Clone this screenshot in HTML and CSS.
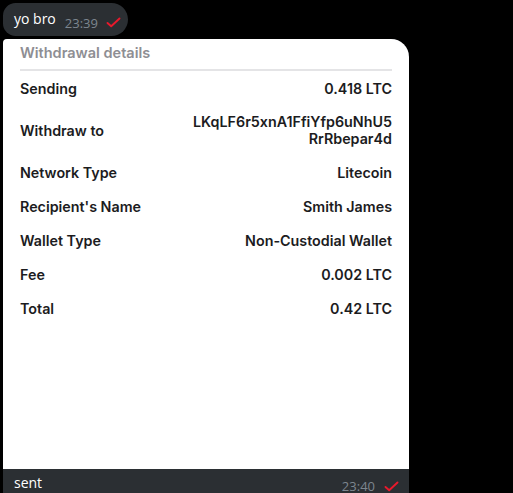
FILE: index.html
```html
<!DOCTYPE html>
<html lang="en">
<head>
  <meta charset="UTF-8" />
  <meta name="viewport" content="width=device-width, initial-scale=1.0"/>
  <title>Chat</title>
  <link rel="stylesheet" href="styles.css">
</head>
<body>
  <div class="chat">
    <!-- short text message -->
    <div class="bubble text-bubble">
      <span class="msg">yo bro</span>
      <span class="meta">23:39
        <svg class="tick" width="15" height="11" viewBox="0 0 15 11"><path d="M1.5 6 L5.2 9.3 L13.5 1.5" fill="none" stroke="#e8192c" stroke-width="1.9" stroke-linecap="round" stroke-linejoin="round"/></svg>
      </span>
    </div>

    <!-- photo message with caption -->
    <div class="bubble photo-bubble">
      <div class="receipt">
        <div class="receipt-title">Withdrawal details</div>
        <div class="row"><span class="label">Sending</span><span class="value">0.418 LTC</span></div>
        <div class="row tall"><span class="label">Withdraw to</span><span class="value">LKqLF6r5xnA1FfiYfp6uNhU5<br>RrRbepar4d</span></div>
        <div class="row"><span class="label">Network Type</span><span class="value">Litecoin</span></div>
        <div class="row"><span class="label">Recipient's Name</span><span class="value">Smith James</span></div>
        <div class="row"><span class="label">Wallet Type</span><span class="value">Non-Custodial Wallet</span></div>
        <div class="row"><span class="label">Fee</span><span class="value">0.002 LTC</span></div>
        <div class="row"><span class="label">Total</span><span class="value">0.42 LTC</span></div>
      </div>
      <div class="caption">
        <span class="msg">sent</span>
        <span class="meta">23:40
          <svg class="tick" width="15" height="11" viewBox="0 0 15 11"><path d="M1.5 6 L5.2 9.3 L13.5 1.5" fill="none" stroke="#e8192c" stroke-width="1.9" stroke-linecap="round" stroke-linejoin="round"/></svg>
        </span>
      </div>
    </div>
  </div>
</body>
</html>
```

FILE: styles.css
```css
:root {
  --bubble: #2b2f33;
  --meta: #7d868f;
  --ink: #1c1c1e;
}
body {
  margin: 0;
  background: #000;
  font-family: 'Open Sans', sans-serif;
  height: 493px;
  overflow: hidden;
}
.chat {
  padding: 3px 0 0 3px;
  display: flex;
  flex-direction: column;
  align-items: flex-start;
  gap: 3px;
}
.bubble {
  background: var(--bubble);
  color: #fff;
}
.msg {
  font-size: 14px;
}
.meta {
  font-size: 13px;
  color: var(--meta);
  display: inline-flex;
  align-items: center;
  gap: 8px;
}
/* 첫 말풍선 */
.text-bubble {
  height: 33px;
  width: 125px;
  box-sizing: border-box;
  border-radius: 13px 17px 17px 13px;
  display: flex;
  align-items: center;
  padding: 0 0 0 11px;
}
.text-bubble .msg {
  margin-top: -3px;
}
.text-bubble .meta {
  margin-left: 9px;
  margin-top: 6px;
}
/* 사진 + 캡션 */
.photo-bubble {
  width: 406px;
  border-radius: 4px 18px 0 0;
  overflow: hidden;
}
.receipt {
  background: #fff;
  height: 430px;
  padding: 3px 17px 0 17px;
  box-sizing: border-box;
  font-family: Inter, sans-serif;
  font-weight: 600;
  color: var(--ink);
}
.receipt-title {
  font-size: 14.5px;
  color: #8e8e93;
  line-height: 22px;
  padding: 0 0 5px 0;
  border-bottom: 2px solid #e4e4e6;
}
.row {
  display: flex;
  justify-content: space-between;
  align-items: center;
  font-size: 14.3px;
  height: 34px;
}
.row.tall {
  height: 50px;
}
.value {
  text-align: right;
  line-height: 17px;
}
.caption {
  height: 40px;
  display: flex;
  justify-content: space-between;
  align-items: flex-start;
  padding: 4px 10px 0 11px;
}
.caption .meta {
  margin-top: 4px;
  gap: 9px;
}
```
